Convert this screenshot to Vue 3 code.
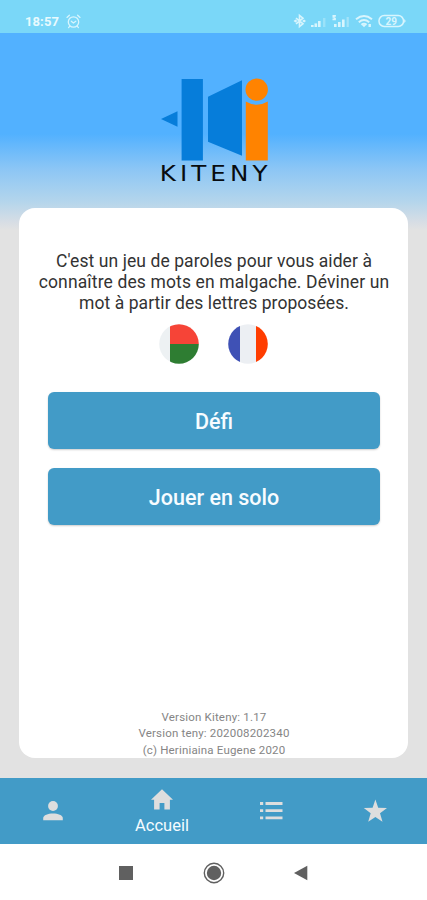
<script setup>
const intro = [
  { text: "C'est un jeu de paroles pour vous aider à", cls: 'l1' },
  { text: 'connaître des mots en malgache. Déviner un', cls: 'l2' },
  { text: 'mot à partir des lettres proposées.', cls: 'l3' },
]
const versions = ['Version Kiteny: 1.17', 'Version teny: 202008202340', '(c) Heriniaina Eugene 2020']
</script>

<template>
  <div class="screen">
    <header class="status">
      <div class="left">
        <span class="time">18:57</span>
        <svg class="alarm" width="15" height="15" viewBox="0 0 15 15" fill="none" stroke="#d8f5fd" stroke-width="1.3" stroke-linecap="round">
          <circle cx="7.5" cy="8" r="5.2" /><path d="M1 3.4 3.4 1.2M14 3.4 11.6 1.2M5.3 7.2 7.4 9 9.8 7.2M3.8 12.2 2.6 13.6M11.2 12.2 12.4 13.6" />
        </svg>
      </div>
      <svg class="signals" width="116" height="18" viewBox="0 0 116 18" fill="#d8f5fd">
        <path d="M-1 6.2 6 11.8 2.5 14.6V3.4L6 6.2-1 11.8" fill="none" stroke="#d8f5fd" stroke-width="1.6" />
        <path d="M-3.5 9 -1.5 7.5 .5 9 -1.5 10.5zM5.1 9 7.1 7.5 9 9 7.1 10.5z" />
        <g><rect x="14" y="13" width="2.6" height="2" /><rect x="17.5" y="11.4" width="2.6" height="3.6" /><rect x="21" y="9" width="2.6" height="6" /><rect x="26" y="6" width="2.4" height="9" opacity=".35" /></g>
        <g><rect x="37" y="12" width="2.6" height="3" /><rect x="41" y="10" width="2.6" height="5" /><rect x="45" y="7.5" width="2.6" height="7.5" /><rect x="49.6" y="5" width="2.2" height="10" opacity=".45" /><path d="M35.5 3h3.4v1.8h-1.2v1h1.2v2.4h-3.4V6.6h1.3v-.8h-1.3z" /></g>
        <g fill="none" stroke="#d8f5fd" stroke-width="2"><path d="M59 7.2Q67 .8 75 7.2M61.8 10.2Q67 5.8 72.2 10.2M64.4 12.8Q67 10.6 69.6 12.8" /></g>
        <path d="M65 13h4l-2 2.2zM71.5 12h2.4v3h-2.4z" />
        <rect x="82" y="3.6" width="24.5" height="10.8" rx="5.2" fill="none" stroke="#d8f5fd" stroke-width="1.5" /><path d="M107.2 7q2.8 2 0 4z" />
        <text x="94.2" y="12.8" text-anchor="middle" class="battery">29</text>
      </svg>
    </header>

    <main class="page">
      <div class="brand">
        <svg width="108" height="83" viewBox="0 0 108 83">
          <path d="M1 41 17.5 33.2V48.8zM21.6.9h21.3v81.6H21.6zM48 18.7 82 2.2v75.5L48 63.8z" fill="#067dda" />
          <g fill="#ff8300"><circle cx="96.7" cy="11.6" r="11.2" /><path d="M85.8 23.5q10.9 6.6 22 0v59h-22z" /></g>
        </svg>
        <span class="name">KITENY</span>
      </div>

      <section class="card">
        <p class="intro"><span v-for="l in intro" :key="l.cls" :class="l.cls">{{ l.text }}</span></p>
        <div class="flags">
          <svg width="40" height="40" viewBox="0 0 40 40">
            <defs><clipPath id="mg"><circle cx="20" cy="20" r="19.8" /></clipPath></defs>
            <g clip-path="url(#mg)"><path d="M0 0h11v40H0z" fill="#edf1f3" /><path d="M11 0h29v20H11z" fill="#f64437" /><path d="M11 20h29v20H11z" fill="#2e7d32" /></g>
          </svg>
          <svg width="40" height="40" viewBox="0 0 40 40">
            <defs><clipPath id="fr"><circle cx="20" cy="20" r="19.8" /></clipPath></defs>
            <g clip-path="url(#fr)"><path d="M0 0h12v40H0z" fill="#3f51b5" /><path d="M12 0h16v40H12z" fill="#eceff3" /><path d="M28 0h12v40H28z" fill="#ff3d00" /></g>
          </svg>
        </div>
        <button class="btn">Défi</button>
        <button class="btn">Jouer en solo</button>
        <footer class="versions"><span v-for="v in versions" :key="v">{{ v }}</span></footer>
      </section>
    </main>

    <nav class="tabs">
      <a><svg width="20" height="20" viewBox="0 0 20 20"><circle cx="10" cy="5" r="4.9" /><path d="M.2 19.3v-2.2C.2 10.8 19.8 10.8 19.8 17.1v2.2z" /></svg></a>
      <a class="active"><svg width="22" height="21" viewBox="0 0 22 21"><path d="M11 .3 22 10.8H18.9V20.5H13.4V14H8.6V20.5H3.1V10.8H0z" /></svg><span>Accueil</span></a>
      <a><svg width="24" height="20" viewBox="0 0 24 20"><path d="M1 1h3.2v2.9H1zM6.5 1h17v2.9h-17zM1 8.2h3.2v2.9H1zM6.5 8.2h17v2.9h-17zM1 15.4h3.2v2.9H1zM6.5 15.4h17v2.9h-17z" /></svg></a>
      <a><svg width="24" height="24" viewBox="0 0 24 24"><path d="M12.4.5 15.2 8.8 24 9 17 14.3 19.5 22.8 12.4 17.9 5.2 22.8 7.7 14.3.8 9 9.6 8.8z" /></svg></a>
    </nav>

    <div class="system">
      <svg width="22" height="22" viewBox="0 0 22 22"><path d="M4 4h14v14H4z" /></svg>
      <svg width="22" height="22" viewBox="0 0 22 22"><circle cx="11" cy="11" r="9.7" fill="none" stroke="#606060" stroke-width="1.4" /><circle cx="11" cy="11" r="7.2" /></svg>
      <svg width="22" height="22" viewBox="0 0 22 22"><path d="M4 11 17.3 3.8V18.2z" /></svg>
    </div>
  </div>
</template>

<style>
body { margin: 0; }
</style>

<style scoped>
.screen { width: 427px; height: 900px; display: flex; flex-direction: column; overflow: hidden; background: #fff; font-family: Roboto, "Liberation Sans", sans-serif; }
.status { height: 33px; flex: none; box-sizing: border-box; background: #7ad7f8; display: flex; justify-content: space-between; padding: 12px 19px 0 25px; }
.left { display: flex; gap: 7px; }
.time { font-size: 13px; line-height: 19px; font-weight: 700; color: #e8fafe; letter-spacing: .1px; }
.alarm { margin-top: 2px; }
.signals { display: block; overflow: visible; margin-right: -4.5px; }
.battery { font: 700 10px Roboto, sans-serif; }
.page { height: 744.5px; flex: none; box-sizing: border-box; display: flex; flex-direction: column; align-items: center; padding-top: 45px; background: linear-gradient(180deg, #52b1ff 0, #52b1ff 101px, #8cc6f5 136px, #b3d5ec 168px, #d5dde5 188px, #e2e2e2 197px); }
.brand { height: 130px; display: flex; flex-direction: column; align-items: center; }
.brand svg { display: block; }
.name { font: 20.5px/22px "DejaVu Sans", sans-serif; letter-spacing: 3.4px; margin: 2px -4px 0 0; color: #080c10; transform: scaleX(1.2); }
.card { width: 389px; height: 550px; flex: none; box-sizing: border-box; background: #fff; border-radius: 16px; display: flex; flex-direction: column; align-items: center; padding-top: 43px; }
.intro { margin: 0; display: flex; flex-direction: column; align-items: center; font-size: 17.5px; line-height: 21px; color: #333; white-space: nowrap; padding-left: 1px; }
.l1 { letter-spacing: .08px; }
.l2 { letter-spacing: .13px; }
.l3 { letter-spacing: .06px; }
.flags { display: flex; gap: 29px; margin: 10px 0 28px; }
.flags svg { display: block; }
.btn { width: 332px; height: 57px; flex: none; border: 0; border-radius: 6px; padding: 1px 0 0; background: #429bc7; color: #f7fcff; font: 500 21.5px Roboto, sans-serif; margin: 0 0 19px 1px; box-shadow: 0 1px 2px #0003; }
.versions { margin-top: auto; display: flex; flex-direction: column; align-items: center; font-size: 11.5px; line-height: 16.5px; letter-spacing: .18px; color: #858585; padding-left: 1px; }
.tabs { height: 66px; flex: none; background: #429bc7; display: grid; grid-template-columns: 105px 114px 103px 105px; fill: #dedede; }
.tabs a { display: flex; flex-direction: column; align-items: center; justify-content: center; }
.tabs svg { display: block; }
.tabs .active { padding-top: 4px; }
.active span { font-size: 16.5px; line-height: 20px; color: #f4fbff; margin-top: 6px; }
.system { flex: 1; display: flex; justify-content: center; gap: 65.5px; padding-top: 18px; fill: #606060; }
</style>
